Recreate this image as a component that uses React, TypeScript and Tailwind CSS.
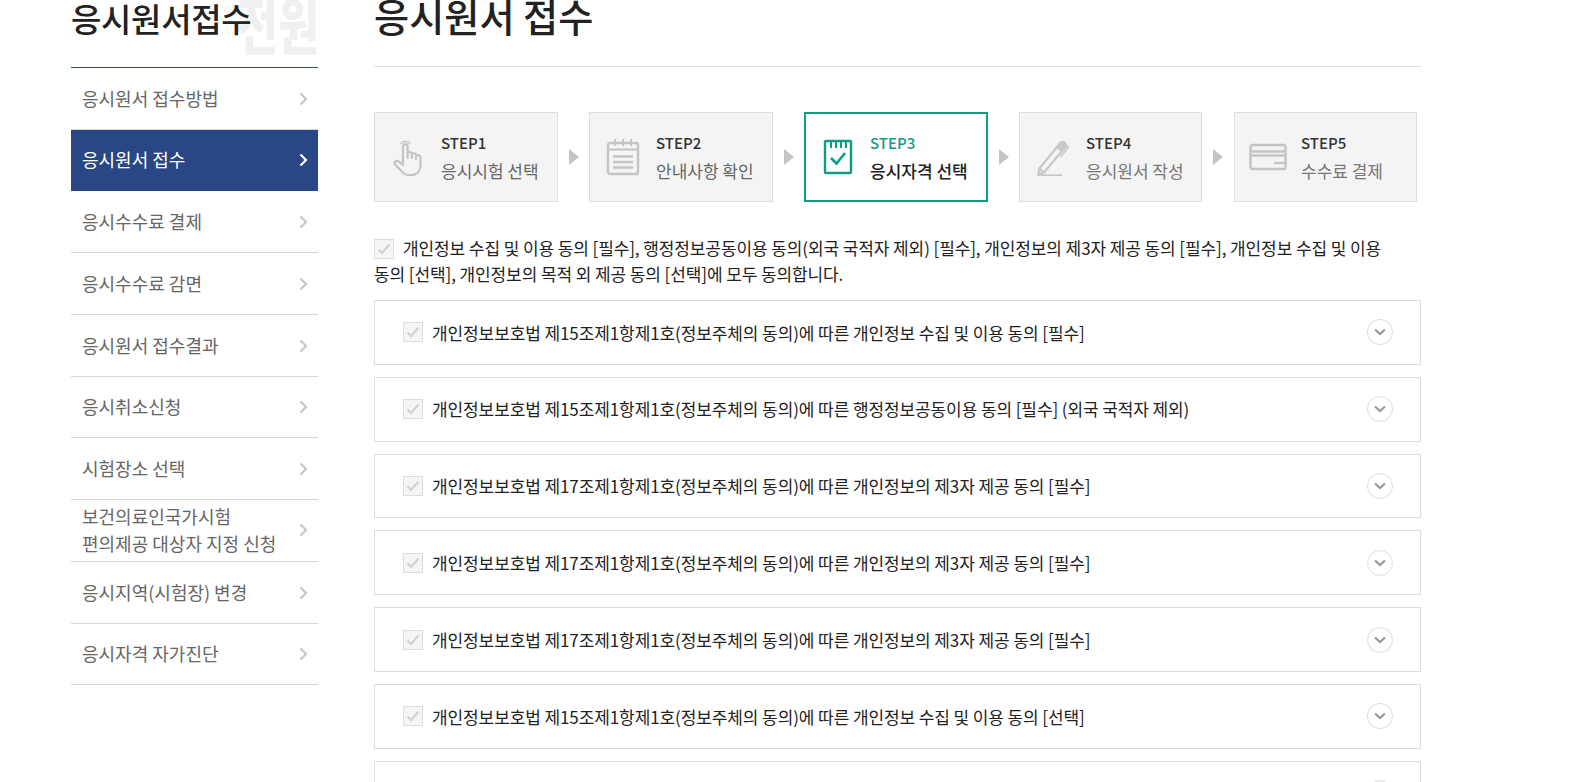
import React from "react";

const font = { fontFamily: '"Noto Sans CJK KR", "Noto Sans", sans-serif' };

const menu: { t: React.ReactNode; h: string; active?: boolean }[] = [
  { t: "응시원서 접수방법", h: "h-[62px]" },
  { t: "응시원서 접수", h: "h-[61px]", active: true },
  { t: "응시수수료 결제", h: "h-[62px]" },
  { t: "응시수수료 감면", h: "h-[62px]" },
  { t: "응시원서 접수결과", h: "h-[62px]" },
  { t: "응시취소신청", h: "h-[61px] pb-[2px]" },
  { t: "시험장소 선택", h: "h-[62px]" },
  { t: <>보건의료인국가시험<br />편의제공 대상자 지정 신청</>, h: "h-[62px] pb-[2px]" },
  { t: "응시지역(시험장) 변경", h: "h-[62px]" },
  { t: "응시자격 자가진단", h: "h-[61px] pb-[2px]" },
];

const rows = [
  "개인정보보호법 제15조제1항제1호(정보주체의 동의)에 따른 개인정보 수집 및 이용 동의 [필수]",
  "개인정보보호법 제15조제1항제1호(정보주체의 동의)에 따른 행정정보공동이용 동의 [필수] (외국 국적자 제외)",
  "개인정보보호법 제17조제1항제1호(정보주체의 동의)에 따른 개인정보의 제3자 제공 동의 [필수]",
  "개인정보보호법 제17조제1항제1호(정보주체의 동의)에 따른 개인정보의 제3자 제공 동의 [필수]",
  "개인정보보호법 제17조제1항제1호(정보주체의 동의)에 따른 개인정보의 제3자 제공 동의 [필수]",
  "개인정보보호법 제15조제1항제1호(정보주체의 동의)에 따른 개인정보 수집 및 이용 동의 [선택]",
  "",
];

function Chevron({ active }: { active?: boolean }) {
  return (
    <svg className="mt-[1px] mr-[-1px]" width="9" height="14" viewBox="0 0 9 14" fill="none" stroke={active ? "#ffffff" : "#c6c6c6"} strokeWidth="2.2">
      <path d="M1.5 1.5 7 7l-5.5 5.5" />
    </svg>
  );
}

function Check() {
  return (
    <span className="flex h-[20px] w-[20px] shrink-0 items-center justify-center border border-[#dddddd] bg-[#f5f5f5]">
      <svg width="14" height="12" viewBox="0 0 14 12" fill="none" stroke="#d0d0d0" strokeWidth="2">
        <path d="M1.5 6.5 5 10l7.5-8.5" />
      </svg>
    </span>
  );
}

function HandIcon() {
  return (
    <svg width="30" height="40" viewBox="0 0 30 40" fill="none" stroke="#c4c4c4" strokeWidth="2.2" strokeLinecap="round" strokeLinejoin="round">
      <path d="M8 6.500a5.500 5.500 0 0 1 9 0" strokeWidth="1.500" />
      <path d="M10 26V9.500a2.300 2.300 0 0 1 4.600 0V21" />
      <path d="M14.600 15.500c2-1.300 4.200-.5 4.200 1.500v4M18.800 17c2-1.200 4.200-.4 4.200 1.500V22M23 18.500c2-1 4.500 0 4.500 2V28c0 6-3.500 10-9 10h-3c-3.500 0-5.500-1.500-7.500-4.500L2 27.500c-1.500-2.500 1.500-4.800 3.800-3L10 28" />
    </svg>
  );
}

function CalIcon() {
  return (
    <svg width="34" height="38" viewBox="0 0 34 38" fill="none" stroke="#c4c4c4" strokeWidth="2.4">
      <rect x="2" y="5" width="30" height="31" rx="2" />
      <path d="M2 11.500h30M9 1v7M17 1v7M25 1v7" strokeWidth="1.800" />
      <path d="M7 18.500h20M7 24h20M7 29.500h20" />
    </svg>
  );
}

function NoteIcon() {
  return (
    <svg width="30" height="36" viewBox="0 0 30 36" fill="none" stroke="#129b83" strokeWidth="2.4">
      <rect x="2" y="2" width="26" height="32" rx="1" />
      <path d="M8 3v6M13 3v6M18 3v6M23 3v6" strokeWidth="2" />
      <path d="M8 19l5.500 5.500L22 14" strokeWidth="2.600" />
    </svg>
  );
}

function PenIcon() {
  return (
    <svg width="36" height="38" viewBox="0 0 36 38" fill="none" stroke="#c8c8c8" strokeWidth="2.200" strokeLinejoin="round">
      <path d="M4 31 22 9l5 4L9 34.500l-5.500 1.500z" />
      <path d="M4.500 30.500l4.500 4" />
      <path d="M22 9l3-4c1.500-2 4-1 5 .200s1.500 3 .2 4.600L27 13" fill="#c8c8c8" />
      <path d="M31 7l2.500 2-8 10" strokeWidth="1.600" />
      <path d="M2 37.500h25" strokeWidth="2.400" />
    </svg>
  );
}

function CardIcon() {
  return (
    <svg width="38" height="30" viewBox="0 0 38 30" fill="none" stroke="#c4c4c4" strokeWidth="2.400">
      <rect x="1.500" y="3" width="35" height="24" rx="2" />
      <path d="M1.500 9.500h35M1.500 13.500h35" />
      <path d="M25 21h12" />
    </svg>
  );
}

const steps = [
  { s: "STEP1", l: "응시시험 선택", icon: <HandIcon />, tone: "text-[#666666]", w: "w-[184px]", iw: "w-[66px]", gap: "w-[31px]" },
  { s: "STEP2", l: "안내사항 확인", icon: <CalIcon />, tone: "text-[#666666]", w: "w-[184px]", iw: "w-[66px]", gap: "w-[31px]" },
  { s: "STEP3", l: "응시자격 선택", icon: <NoteIcon />, active: true, tone: "", w: "w-[184px]", iw: "w-[64px]", gap: "w-[31px]" },
  { s: "STEP4", l: "응시원서 작성", icon: <PenIcon />, tone: "text-[#777777]", w: "w-[183px]", iw: "w-[66px]", gap: "w-[31px]" },
  { s: "STEP5", l: "수수료 결제", icon: <CardIcon />, tone: "text-[#777777]", w: "w-[183px]", iw: "w-[66px]", gap: "w-[32px]" },
];

export default function App() {
  return (
    <div style={font} className="h-[782px] w-[1585px] overflow-hidden bg-white text-[#222222]">
      <div className="ml-[71px] flex items-start">
        <aside className="w-[247px] shrink-0">
          <div className="relative h-[68px] overflow-hidden border-b border-[#2d4a86]">
            <span className="absolute left-[166px] top-[-15px] origin-left scale-x-[0.72] whitespace-nowrap text-[62px] leading-[76px] font-black text-[#f0f0f0]">전원</span>
            <h2 className="relative text-[33px] leading-[36px] font-medium tracking-[-0.3px] text-[#222222]">응시원서접수</h2>
          </div>
          {menu.map((m, i) => (
            <div
              key={i}
              className={`flex items-center justify-between pl-[11px] pr-[11px] text-[18px] leading-[27px] ${m.h} ${
                m.active ? "bg-[#284784] pb-[2px] text-white" : "border-b border-[#d8d8d8] text-[#666666]"
              }`}
            >
              <span>{m.t}</span>
              <Chevron active={m.active} />
            </div>
          ))}
        </aside>

        <main className="ml-[56px] w-[1047px] shrink-0">
          <div className="h-[67px] border-b border-[#dddddd]">
            <h1 className="text-[38.200px] leading-[32px] font-medium text-[#222222]">응시원서 접수</h1>
          </div>

          <div className="mt-[45px] flex items-center">
            {steps.map((st, i) => (
              <React.Fragment key={st.s}>
                {i > 0 && (
                  <div className={`flex justify-center ${st.gap}`}>
                    <span className="h-0 w-0 border-y-[8.5px] border-l-[10px] border-y-transparent border-l-[#c4c4c4]" />
                  </div>
                )}
                <div
                  className={`flex h-[90px] items-center ${st.w} ${
                    st.active ? "border-2 border-[#129b83] bg-white" : "border border-[#dddddd] bg-[#f4f4f4]"
                  }`}
                >
                  <div className={`flex shrink-0 justify-center ${st.iw}`}>{st.icon}</div>
                  <div>
                    <p className={`text-[15px] leading-[28px] font-medium ${st.active ? "text-[#129b83]" : "text-[#333333]"}`}>{st.s}</p>
                    <p className={`whitespace-nowrap text-[17px] leading-[28px] ${st.active ? "font-medium text-[#222222]" : st.tone}`}>{st.l}</p>
                  </div>
                </div>
              </React.Fragment>
            ))}
          </div>

          <div className="mt-[33px] pr-[30px] text-[17px] leading-[26px] tracking-[-0.1px] text-[#222222]">
            <span className="mr-[9px] inline-block translate-y-[-1px] align-middle"><Check /></span>
            개인정보 수집 및 이용 동의 [필수], 행정정보공동이용 동의(외국 국적자 제외) [필수], 개인정보의 제3자 제공 동의 [필수], 개인정보 수집 및 이용 동의 [선택], 개인정보의 목적 외 제공 동의 [선택]에 모두 동의합니다.
          </div>

          <div className="mt-[13px] flex flex-col gap-[12px]">
            {rows.map((r, i) => (
              <div key={i} className="flex h-[64.800px] shrink-0 items-center border border-[#dddddd] pl-[28px] pr-[27px]">
                <Check />
                <span className="ml-[9px] flex-1 text-[17px] tracking-[-0.1px] text-[#222222]">{r}</span>
                <span className="flex h-[26px] w-[26px] items-center justify-center rounded-full border border-[#dddddd]">
                  <svg width="12" height="8" viewBox="0 0 12 8" fill="none" stroke="#999999" strokeWidth="2.200">
                    <path d="M1 1.500 6 6l5-4.500" />
                  </svg>
                </span>
              </div>
            ))}
          </div>
        </main>
      </div>
    </div>
  );
}
